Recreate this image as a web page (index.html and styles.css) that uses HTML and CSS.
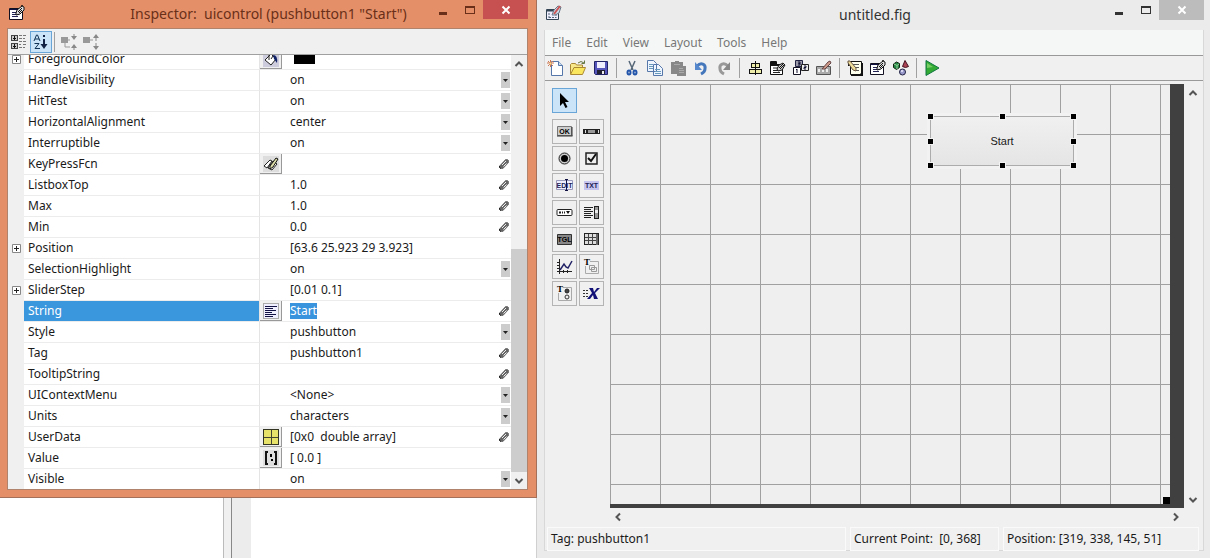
FILE: index.html
```html
<!DOCTYPE html>
<html lang="en">
<head>
    <meta charset="UTF-8">
    <meta name="viewport" content="width=device-width, initial-scale=1.0">
    <title>untitled.fig</title>
    <link rel="stylesheet" href="styles.css">
</head>
<body>
    <!-- Shared icons -->
    <svg class="sprite" aria-hidden="true">
        <symbol id="pen" viewBox="0 0 12 12">
            <path d="M1.500 8L7.500 1.500h2l1 1v2L5 10.500H2.500L1.500 9.500z" fill="#666" stroke="#444" stroke-width=".5"/>
            <path d="M4 7l4-4M5.500 8.500l3-3" stroke="#eee" stroke-width="1"/>
            <path d="M1.500 8v1.500L3 10.500" stroke="#222" fill="none"/>
        </symbol>
        <symbol id="plus" viewBox="0 0 9 9">
            <path d="M.5.5h8v8h-8z" fill="#fff" stroke="#888"/>
            <path d="M2 4.500h5M4.500 2v5" stroke="#222"/>
        </symbol>
        <symbol id="inspect" viewBox="0 0 16 16">
            <path d="M.5 3.500h13v11H.5z" fill="#fff" stroke="#112"/>
            <path d="M1 4.500h12" stroke="#114"/>
            <path d="M3 7.500h5M3 9.500h7M3 11.500h6" stroke="#225"/>
            <path d="M7 8l1-3 5-4 2 1v3l-4 4-4 1z" fill="#ddd" stroke="#111"/>
            <path d="M9 7l4-4M10 8l3-3M12 1l2-1" stroke="#111"/>
        </symbol>
        <symbol id="up" viewBox="0 0 10 10"><path d="M1.500 7L5 3.500 8.500 7" fill="none" stroke="#555" stroke-width="2"/></symbol>
        <symbol id="down" viewBox="0 0 10 10"><path d="M1.500 3L5 6.500 8.500 3" fill="none" stroke="#555" stroke-width="2"/></symbol>
        <symbol id="close" viewBox="0 0 10 10"><path d="M1.500 1.500l7 7M8.500 1.500l-7 7" stroke="#fff" stroke-width="2"/></symbol>
        <symbol id="minimize" viewBox="0 0 10 10"><path d="M1 8.500h8" stroke="currentColor" stroke-width="3"/></symbol>
        <symbol id="maximize" viewBox="0 0 10 10"><path d="M.5 2h9M.5 8.500h9M.5 1v8M9.500 1v8" stroke="currentColor"/><path d="M0 2h10" stroke="currentColor" stroke-width="2"/></symbol>
    </svg>

    <div class="desktop">
        <div class="left-side">
            <section class="window inspector">
                <header class="titlebar">
                    <svg class="app-icon" width="16" height="16"><use href="#inspect"/></svg>
                    <h1>Inspector:  uicontrol (pushbutton1 "Start")</h1>
                    <div class="window-buttons">
                        <button aria-label="Minimize"><svg width="10" height="10"><use href="#minimize"/></svg></button>
                        <button aria-label="Maximize"><svg width="10" height="10"><use href="#maximize"/></svg></button>
                        <button class="close" aria-label="Close"><svg width="10" height="10"><use href="#close"/></svg></button>
                    </div>
                </header>
                <div class="inspector-body">
                    <div class="sort-bar">
                        <button aria-label="Group by category">
                            <svg width="16" height="16" viewBox="0 0 16 16" shape-rendering="crispEdges">
                                <path d="M.5 1.500h6v5h-6zM.5 9.500h6v5h-6z" fill="#ccc" stroke="#444"/>
                                <path d="M2 4h3M3.500 2v4M2 12h3M3.500 10v4" stroke="#111"/>
                                <path d="M8 1.500h3M12 1.500h3M8 4.500h3M12 4.500h2M8 7.500h3M12 7.500h3M8 10.500h2M12 10.500h3M8 13.500h3M12 13.500h2" stroke="#777"/>
                            </svg>
                        </button>
                        <button class="pressed" aria-label="Sort alphabetically">
                            <svg width="16" height="16" viewBox="0 0 16 16">
                                <path d="M1 7l2.500-6h1L7 7M2 5h4M1.500 9.500H6L2 14.500h5" fill="none" stroke="#135"/>
                                <path d="M11 1v2M11 5v7" stroke="#124" stroke-width="2"/>
                                <path d="M7.500 10h7L11 15z" fill="#124"/>
                            </svg>
                        </button>
                        <span class="separator"></span>
                        <button aria-label="Expand all" disabled>
                            <svg width="16" height="16" viewBox="0 0 16 16">
                                <path d="M0 3h7v6H0z" fill="#999"/><path d="M4 9v4h5M9 6H7" fill="none" stroke="#999"/>
                                <path d="M10 2h6l-3 4zM10 14h6l-3-4z" fill="#888"/><path d="M13 0v2M13 14v2" stroke="#888"/>
                            </svg>
                        </button>
                        <button aria-label="Collapse all" disabled>
                            <svg width="16" height="16" viewBox="0 0 16 16">
                                <path d="M0 3h7v6H0z" fill="#999"/><path d="M7 6h3" stroke="#999"/>
                                <path d="M10 4h6l-3-4zM10 12h6l-3 4z" fill="#888"/><path d="M13 4v3M13 9v3" stroke="#888"/>
                            </svg>
                        </button>
                    </div>
                    <div class="property-pane">
                        <div class="property-scroll">
                            <table class="properties">
                                <colgroup><col class="col-expand"><col class="col-name"><col class="col-tool"><col><col class="col-edit"></colgroup>
                                <tbody>
                                    <tr>
                                        <td><svg width="9" height="9"><use href="#plus"/></svg></td>
                                        <th scope="row">ForegroundColor</th>
                                        <td><button class="tool" aria-label="Pick color"><svg width="16" height="16" viewBox="0 0 16 16"><path d="M0 0h16v16H0z" fill="#ccd"/><path d="M2 9l6-6 5 5-5 6z" fill="#fff" stroke="#222"/><path d="M6 9V3q1-2 3 0M8 8l2-3" fill="none" stroke="#222"/><path d="M10 4q5 0 4 8l-3-4z" fill="#126"/></svg></button></td>
                                        <td><span class="swatch"></span></td>
                                        <td></td>
                                    </tr>
                                    <tr>
                                        <td></td><th scope="row"><label for="handle-visibility">HandleVisibility</label></th><td></td>
                                        <td colspan="2"><select id="handle-visibility"><option>on</option><option>off</option></select></td>
                                    </tr>
                                    <tr>
                                        <td></td><th scope="row"><label for="hit-test">HitTest</label></th><td></td>
                                        <td colspan="2"><select id="hit-test"><option>on</option><option>off</option></select></td>
                                    </tr>
                                    <tr>
                                        <td></td><th scope="row"><label for="horizontal-alignment">HorizontalAlignment</label></th><td></td>
                                        <td colspan="2"><select id="horizontal-alignment"><option>center</option><option>left</option><option>right</option></select></td>
                                    </tr>
                                    <tr>
                                        <td></td><th scope="row"><label for="interruptible">Interruptible</label></th><td></td>
                                        <td colspan="2"><select id="interruptible"><option>on</option><option>off</option></select></td>
                                    </tr>
                                    <tr>
                                        <td></td><th scope="row"><label for="key-press">KeyPressFcn</label></th>
                                        <td><button class="tool" aria-label="Edit callback"><svg width="16" height="16" viewBox="0 0 16 16"><path d="M0 0h16v16H0z" fill="#ddd"/><path d="M1 10l6-6 2 1-5 7zM5 12l5-7 4 3-5 6z" fill="#fff" stroke="#222"/><path d="M7 10l6-8 2 1-5 8-3 2z" fill="#dda" stroke="#111"/></svg></button></td>
                                        <td><input type="text" id="key-press"></td>
                                        <td><svg class="pen" width="12" height="12"><use href="#pen"/></svg></td>
                                    </tr>
                                    <tr>
                                        <td></td><th scope="row"><label for="listbox-top">ListboxTop</label></th><td></td>
                                        <td><input type="text" id="listbox-top" value="1.0"></td>
                                        <td><svg class="pen" width="12" height="12"><use href="#pen"/></svg></td>
                                    </tr>
                                    <tr>
                                        <td></td><th scope="row"><label for="max">Max</label></th><td></td>
                                        <td><input type="text" id="max" value="1.0"></td>
                                        <td><svg class="pen" width="12" height="12"><use href="#pen"/></svg></td>
                                    </tr>
                                    <tr>
                                        <td></td><th scope="row"><label for="min">Min</label></th><td></td>
                                        <td><input type="text" id="min" value="0.0"></td>
                                        <td><svg class="pen" width="12" height="12"><use href="#pen"/></svg></td>
                                    </tr>
                                    <tr>
                                        <td><svg width="9" height="9"><use href="#plus"/></svg></td>
                                        <th scope="row"><label for="position">Position</label></th><td></td>
                                        <td><input type="text" id="position" value="[63.6 25.923 29 3.923]"></td><td></td>
                                    </tr>
                                    <tr>
                                        <td></td><th scope="row"><label for="selection-highlight">SelectionHighlight</label></th><td></td>
                                        <td colspan="2"><select id="selection-highlight"><option>on</option><option>off</option></select></td>
                                    </tr>
                                    <tr>
                                        <td><svg width="9" height="9"><use href="#plus"/></svg></td>
                                        <th scope="row"><label for="slider-step">SliderStep</label></th><td></td>
                                        <td><input type="text" id="slider-step" value="[0.01 0.1]"></td><td></td>
                                    </tr>
                                    <tr class="current">
                                        <td></td><th scope="row"><label for="string">String</label></th>
                                        <td><button class="tool" aria-label="Edit text"><svg width="16" height="16" viewBox="0 0 16 16" shape-rendering="crispEdges"><path d="M.5.5h15v15H.5z" fill="#eef" stroke="#aaa"/><path d="M2 3h12M2 5h8M2 7h11M2 9h7M2 11h11M2 13h8" stroke="#114"/></svg></button></td>
                                        <td><input type="text" id="string" class="selected" value="Start"></td>
                                        <td><svg class="pen" width="12" height="12"><use href="#pen"/></svg></td>
                                    </tr>
                                    <tr>
                                        <td></td><th scope="row"><label for="style">Style</label></th><td></td>
                                        <td colspan="2"><select id="style"><option>pushbutton</option></select></td>
                                    </tr>
                                    <tr>
                                        <td></td><th scope="row"><label for="tag">Tag</label></th><td></td>
                                        <td><input type="text" id="tag" value="pushbutton1"></td>
                                        <td><svg class="pen" width="12" height="12"><use href="#pen"/></svg></td>
                                    </tr>
                                    <tr>
                                        <td></td><th scope="row"><label for="tooltip-string">TooltipString</label></th><td></td>
                                        <td><input type="text" id="tooltip-string"></td>
                                        <td><svg class="pen" width="12" height="12"><use href="#pen"/></svg></td>
                                    </tr>
                                    <tr>
                                        <td></td><th scope="row"><label for="context-menu">UIContextMenu</label></th><td></td>
                                        <td colspan="2"><select id="context-menu"><option>&lt;None&gt;</option></select></td>
                                    </tr>
                                    <tr>
                                        <td></td><th scope="row"><label for="units">Units</label></th><td></td>
                                        <td colspan="2"><select id="units"><option>characters</option><option>pixels</option></select></td>
                                    </tr>
                                    <tr>
                                        <td></td><th scope="row"><label for="user-data">UserData</label></th>
                                        <td><button class="tool" aria-label="Edit array"><svg width="16" height="16" viewBox="0 0 16 16" shape-rendering="crispEdges"><path d="M.5.5h15v15H.5z" fill="#e6e26a" stroke="#332"/><path d="M8 1v14M1 8h14" stroke="#443"/></svg></button></td>
                                        <td><input type="text" id="user-data" value="[0x0  double array]"></td>
                                        <td><svg class="pen" width="12" height="12"><use href="#pen"/></svg></td>
                                    </tr>
                                    <tr>
                                        <td></td><th scope="row"><label for="value">Value</label></th>
                                        <td><button class="tool" aria-label="Edit value"><svg width="16" height="16" viewBox="0 0 16 16" shape-rendering="crispEdges"><path d="M0 0h16v16H0z" fill="#ddd"/><path d="M5 2H3v12h2M11 2h2v12h-2" fill="none" stroke="#111" stroke-width="2"/><path d="M7 4h2v3H7zM8 9h2v2H8z"/></svg></button></td>
                                        <td><input type="text" id="value" value="[ 0.0 ]"></td><td></td>
                                    </tr>
                                    <tr>
                                        <td></td><th scope="row"><label for="visible">Visible</label></th><td></td>
                                        <td colspan="2"><select id="visible"><option>on</option><option>off</option></select></td>
                                    </tr>
                                </tbody>
                            </table>
                        </div>
                        <div class="scrollbar">
                            <button aria-label="Scroll up"><svg width="10" height="10"><use href="#up"/></svg></button>
                            <span class="track"></span>
                            <span class="thumb"></span>
                            <button aria-label="Scroll down"><svg width="10" height="10"><use href="#down"/></svg></button>
                        </div>
                    </div>
                </div>
            </section>
            <div class="behind">
                <span class="behind-page"></span>
                <span class="behind-splitter"></span>
                <span class="behind-margin"></span>
                <span class="behind-page"></span>
            </div>
        </div>

        <section class="window guide">
            <header class="titlebar">
                <svg class="app-icon" width="16" height="16" viewBox="0 0 16 16">
                    <path d="M.5 4.500h12v10H.5z" fill="#eef" stroke="#345"/><path d="M1 5.500h11" stroke="#345" stroke-width="2"/>
                    <path d="M3 8v5M3 12.500h7M10 9v4" fill="none" stroke="#567" stroke-dasharray="2 1"/>
                    <path d="M6 10l2-5 4-4 3 1-2 6-4 2z" fill="#cde" stroke="#678"/><path d="M8 9l6-8" stroke="#c55" stroke-width="2"/>
                </svg>
                <h1>untitled.fig</h1>
                <div class="window-buttons">
                    <button aria-label="Minimize"><svg width="10" height="10"><use href="#minimize"/></svg></button>
                    <button aria-label="Maximize"><svg width="10" height="10"><use href="#maximize"/></svg></button>
                    <button class="close" aria-label="Close"><svg width="10" height="10"><use href="#close"/></svg></button>
                </div>
            </header>
            <div class="guide-body">
                <nav class="menubar">
                    <a href="#">File</a>
                    <a href="#">Edit</a>
                    <a href="#">View</a>
                    <a href="#">Layout</a>
                    <a href="#">Tools</a>
                    <a href="#">Help</a>
                </nav>
                <div class="toolbar">
                    <button aria-label="New"><svg width="16" height="16" viewBox="0 0 16 16"><path d="M4.500 1.500h7l4 4v10h-11z" fill="#fff" stroke="#57a"/><path d="M11.500 1.500v4h4" fill="#cde" stroke="#57a"/><path d="M0 3h7M3.500 0v7M1 1l5 5M6 1L1 6" stroke="#c75"/><path d="M2.500 2.500h2v2h-2z" fill="#fd8"/></svg></button>
                    <button aria-label="Open"><svg width="16" height="16" viewBox="0 0 16 16"><path d="M.5 14V4.500l1-1h4l1 1.500h6v3" fill="#f8e88a" stroke="#a83"/><path d="M.5 14.500L4 7.500h11.500l-3 7z" fill="#fbe75e" stroke="#a83"/><path d="M8 3q3-3 6 0M14.500.5v3h-3" fill="none" stroke="#674"/></svg></button>
                    <button aria-label="Save"><svg width="16" height="16" viewBox="0 0 16 16"><path d="M1.500 1.500h13v13h-12l-1-1z" fill="#55b" stroke="#226"/><path d="M4 2h8v6H4z" fill="#eef"/><path d="M4 10h8v4H4z" fill="#223"/><path d="M9 11h2v3H9z" fill="#eee"/></svg></button>
                    <span class="separator"></span>
                    <button aria-label="Cut"><svg width="16" height="16" viewBox="0 0 16 16"><path d="M5 1l4 9M11 1L7 10" stroke="#567" stroke-width="1.500"/><ellipse cx="5" cy="12.500" rx="1.500" ry="2" fill="none" stroke="#25a" stroke-width="2"/><ellipse cx="11" cy="12.500" rx="1.500" ry="2" fill="none" stroke="#25a" stroke-width="2"/></svg></button>
                    <button aria-label="Copy"><svg width="16" height="16" viewBox="0 0 16 16"><path d="M.5.5h6l3 3v8h-9zM6.500 4.500h5l4 4v7h-9z" fill="#eef5ff" stroke="#57a"/><path d="M2 4.500h4M2 6.500h4M2 8.500h4M8 9.500h5M8 11.500h6M8 13.500h6" stroke="#69b"/></svg></button>
                    <button aria-label="Paste" disabled><svg width="16" height="16" viewBox="0 0 16 16"><path d="M1 2h4V1h4v1h4v4h3v10H7v-2H1z" fill="#888"/><path d="M4 4.500h6M9 8.500h4M9 10.500h5M9 12.500h5" stroke="#aaa"/></svg></button>
                    <button aria-label="Undo"><svg width="16" height="16" viewBox="0 0 16 16"><path d="M4 6c4-4 9-2 8 3q0 3-4 5" fill="none" stroke="#47b" stroke-width="3"/><path d="M2 2v8h7z" fill="#58c"/></svg></button>
                    <button aria-label="Redo" disabled><svg width="16" height="16" viewBox="0 0 16 16"><path d="M12 6C8 2 3 4 4 9q0 3 4 5" fill="none" stroke="#999" stroke-width="3"/><path d="M14 2v8H7z" fill="#888"/></svg></button>
                    <span class="separator"></span>
                    <button aria-label="Align objects"><svg width="16" height="16" viewBox="0 0 16 16" shape-rendering="crispEdges"><path d="M8.500 1v14" stroke="#111"/><path d="M4.500 3.500h8v4h-8zM2.500 9.500h12v4h-12z" fill="#eea" stroke="#111"/><path d="M8.500 4v10" stroke="#111"/></svg></button>
                    <button aria-label="Menu editor"><svg width="16" height="16" viewBox="0 0 16 16"><path d="M.5 1.500h6v3h6v10H.5z" fill="#fff" stroke="#111"/><path d="M1 3h6M1 5h11" stroke="#111" stroke-width="2"/><path d="M3 8h5M3 10.500h6M3 12.500h7" stroke="#222"/><path d="M7 9l2-4 4-2 2 2-3 5-4 1z" fill="#ccc" stroke="#111"/><path d="M9 8l5-5M10 9l4-4" stroke="#111"/></svg></button>
                    <button aria-label="Tab order editor"><svg width="16" height="16" viewBox="0 0 16 16"><path d="M2.500.5h7v6h-7z" fill="#99a" stroke="#224"/><path d="M8.500 4.500h7v6h-7z" fill="#eee" stroke="#222"/><path d="M.5 7.500h7v7h-7z" fill="#fff" stroke="#112"/><path d="M5 2h2v1.500H5.500H7V5H5M11 6h2v1.500h-2V9h2M3 10l1-1v4" fill="none" stroke="#113"/></svg></button>
                    <button aria-label="Toolbar editor"><svg width="16" height="16" viewBox="0 0 16 16"><path d="M.5 6.500h14v8H.5z" fill="#aaa" stroke="#555"/><path d="M2 9h2v3H2zM6 9h2v3H6zM10 9h2v3h-2z" fill="#eee"/><path d="M6 9l6-7 2-1 1 2-6 6z" fill="#c98" stroke="#644"/></svg></button>
                    <span class="separator"></span>
                    <button aria-label="Editor"><svg width="16" height="16" viewBox="0 0 16 16"><path d="M3.500 1.500h11v12l-2 1h-9z" fill="#ffe" stroke="#111"/><path d="M15 3v12H4M2 2v4" fill="none" stroke="#111" stroke-width="2"/><path d="M6 4.500h6M8 7.500h4M9 10.500h3" stroke="#555"/><path d="M1 1l2 0 6 7v3L6 10 1 3z" fill="#ed9" stroke="#654"/></svg></button>
                    <button aria-label="Property inspector"><svg width="16" height="16"><use href="#inspect"/></svg></button>
                    <button aria-label="Object browser"><svg width="16" height="16" viewBox="0 0 16 16"><path d="M.5 4L3.500 2l3 1.500v4l-3 2-3-2z" fill="#284" stroke="#121"/><path d="M1 4l3 1.500L6 4M4 5.500V9" fill="none" stroke="#9c9"/><path d="M12 .5l3.500 6q-3 2-6 0z" fill="#a45" stroke="#412"/><circle cx="9.500" cy="12" r="3" fill="#99c" stroke="#224"/><circle cx="9" cy="11" r="1" fill="#eef"/></svg></button>
                    <span class="separator"></span>
                    <button aria-label="Run"><svg width="16" height="16" viewBox="0 0 16 16"><path d="M2 .5v15L15 8z" fill="#3a3" stroke="#174"/><path d="M3 3v5l6-1z" fill="#7c6"/></svg></button>
                </div>
                <div class="workspace">
                    <div class="palette">
                        <button class="pressed" aria-label="Select"><svg width="17" height="17" viewBox="0 0 17 17"><path d="M4 1v13l3-3 2.500 5 2-1L9 10h4z" fill="#000"/></svg></button>
                        <button aria-label="Push button"><svg width="17" height="17" viewBox="0 0 17 17"><path d="M1.500 3.500h14v9h-14z" fill="#ccc" stroke="#777"/><path d="M1 13h15.500M16 4v9" stroke="#333"/><text x="8.500" y="11">OK</text></svg></button>
                        <button aria-label="Slider"><svg width="17" height="17" viewBox="0 0 17 17" shape-rendering="crispEdges"><path d="M0 6h17v5H0z" fill="#222"/><path d="M5 7h7v3H5z" fill="#999"/><path d="M2 7v3M15 7v3" stroke="#ddd"/></svg></button>
                        <button aria-label="Radio button"><svg width="17" height="17" viewBox="0 0 17 17"><circle cx="8.500" cy="8.500" r="5.500" fill="#ccc" stroke="#222"/><circle cx="8.500" cy="8.500" r="3.500" fill="#000"/></svg></button>
                        <button aria-label="Check box"><svg width="17" height="17" viewBox="0 0 17 17"><path d="M3 3h11v11H3z" fill="#eee" stroke="#222" stroke-width="1.500"/><path d="M5 8l3 3 5-7" fill="none" stroke="#111" stroke-width="2"/></svg></button>
                        <button aria-label="Edit text"><svg width="17" height="17" viewBox="0 0 17 17"><path d="M.5 3.500h16v9H.5z" fill="#eef" stroke="#99b"/><text class="blue" x="8.500" y="11">EDIT</text><path d="M10.500 3v10M9 2.500h3M9 13.500h3" stroke="#114"/></svg></button>
                        <button aria-label="Static text"><svg width="17" height="17" viewBox="0 0 17 17"><path d="M1 4h15v9H1z" fill="#c4c4ee"/><text class="blue" x="8.500" y="11">TXT</text></svg></button>
                        <button aria-label="Pop-up menu"><svg width="17" height="17" viewBox="0 0 17 17"><rect x="1" y="5.500" width="15" height="6" rx="1" fill="#fff" stroke="#222"/><path d="M3 8.500h2M6 8.500h1M8 8.500h1" stroke="#222" stroke-width="2"/><path d="M10 7h4l-2 3z" fill="#111"/></svg></button>
                        <button aria-label="List box"><svg width="17" height="17" viewBox="0 0 17 17" shape-rendering="crispEdges"><path d="M11.500 2.500h4v12h-4z" fill="#999" stroke="#222"/><path d="M12 6h3v3h-3z" fill="#eee"/><path d="M1 3.500h9M1 5.500h7M1 7.500h9M1 9.500h7M1 11.500h9M1 13.500h7" stroke="#222"/></svg></button>
                        <button aria-label="Toggle button"><svg width="17" height="17" viewBox="0 0 17 17"><path d="M1.500 3.500h14v10h-14z" fill="#888" stroke="#333"/><text x="8.500" y="11">TGL</text></svg></button>
                        <button aria-label="Table"><svg width="17" height="17" viewBox="0 0 17 17" shape-rendering="crispEdges"><path d="M1.500 2.500h14v11h-14z" fill="#ddd" stroke="#222"/><path d="M5.500 3v11M9.500 3v11M2 6.500h11M2 9.500h11" stroke="#444"/><path d="M14 3v11" stroke="#666" stroke-width="2"/></svg></button>
                        <button aria-label="Axes"><svg width="17" height="17" viewBox="0 0 17 17"><path d="M3.500 1v15M1 13.500h15M1 4.500h3M1 7.500h3M1 10.500h3M7.500 12v3M11.500 12v3" stroke="#222"/><path d="M4 12l4-6 2 3 2 1 4-7" fill="none" stroke="#226" stroke-width="1.500"/></svg></button>
                        <button aria-label="Panel"><svg width="17" height="17" viewBox="0 0 17 17"><path d="M7 3.500h8.500v12H2.500V8" fill="none" stroke="#aaa"/><path d="M6.500 7.500h5v4h-5zM8.500 9.500h5v4h-5z" fill="none" stroke="#999"/><text class="serif" x="4" y="7">T</text></svg></button>
                        <button aria-label="Button group"><svg width="17" height="17" viewBox="0 0 17 17"><path d="M7 2.500h8.500v13H2.500V8" fill="none" stroke="#aaa"/><circle cx="11" cy="6" r="2" fill="#444" stroke="#222"/><circle cx="11" cy="12" r="2" fill="#eee" stroke="#333"/><text class="serif" x="4" y="7">T</text></svg></button>
                        <button aria-label="ActiveX control"><svg width="17" height="17" viewBox="0 0 17 17"><path d="M0 5.500h6M0 8.500h6M0 11.500h6" stroke="#333" stroke-dasharray="2 1"/><path d="M6 3h4l1 4 3-4h3l-5 5 3 6h-4l-1-4-3 4H4l5-6z" fill="#117"/></svg></button>
                    </div>
                    <div class="viewport">
                        <div class="canvas-area">
                            <div class="canvas">
                                <div class="placed">
                                    <button>Start</button>
                                    <i class="handle top start"></i><i class="handle top center"></i><i class="handle top end"></i>
                                    <i class="handle middle start"></i><i class="handle middle center"></i><i class="handle middle end"></i>
                                    <i class="handle bottom start"></i><i class="handle bottom center"></i><i class="handle bottom end"></i>
                                </div>
                                <span class="resize"></span>
                            </div>
                        </div>
                        <div class="scrollbar">
                            <button aria-label="Scroll up"><svg width="10" height="10"><use href="#up"/></svg></button>
                            <button aria-label="Scroll down"><svg width="10" height="10"><use href="#down"/></svg></button>
                        </div>
                        <div class="scrollbar-x">
                            <button aria-label="Scroll left"><svg width="10" height="10" viewBox="0 0 10 10"><path d="M7 1.500L3.500 5 7 8.500" fill="none" stroke="#555" stroke-width="2"/></svg></button>
                            <button aria-label="Scroll right"><svg width="10" height="10" viewBox="0 0 10 10"><path d="M3 1.500L6.500 5 3 8.500" fill="none" stroke="#555" stroke-width="2"/></svg></button>
                        </div>
                    </div>
                </div>
                <footer class="statusbar">
                    <span>Tag: pushbutton1</span>
                    <span>Current Point:  [0, 368]</span>
                    <span>Position: [319, 338, 145, 51]</span>
                </footer>
            </div>
        </section>
    </div>
</body>
</html>
```
FILE: styles.css
```css
* {
    box-sizing: border-box;
}
body {
    margin: 0;
    font-family: "Noto Sans", "Open Sans", sans-serif;
    font-size: 12px;
    color: #1a1a1a;
    background-color: white;
}
button, input, select {
    margin: 0;
    padding: 0;
    border: 0;
    border-radius: 0;
    background: none;
    font: inherit;
    color: inherit;
}
svg {
    display: block;
}
.sprite {
    display: none;
}
.desktop {
    display: grid;
    grid-template-columns: 537fr 673fr;
    height: 100vh;
    min-height: 400px;
}
.left-side, .window, .inspector-body, .guide-body {
    display: flex;
    flex-direction: column;
    min-width: 0;
    min-height: 0;
}

/* Title bars */
.titlebar {
    display: grid;
    grid-template-columns: 1fr auto 1fr;
    height: 28px;
    padding-left: 2px;
}
.titlebar h1 {
    margin: 0;
    font-size: 14px;
    font-weight: normal;
    line-height: 28px;
    white-space: pre;
}
.app-icon {
    margin-top: 5px;
}
.window-buttons {
    display: flex;
    justify-content: flex-end;
    align-items: flex-start;
}
.window-buttons button {
    display: flex;
    justify-content: center;
    align-items: center;
    width: 27px;
    height: 19px;
}
.window-buttons .close {
    width: 45px;
}

/* Inspector window */
.inspector {
    flex: 1;
    padding: 0 8px 7px 7px;
    background-color: #e58f68;
    border-right: 1px solid #a5705a;
    border-bottom: 1px solid #a5705a;
}
.inspector .titlebar {
    color: #6a2f18;
}
.inspector .close {
    background-color: #c75050;
}
.inspector-body {
    flex: 1;
    border: 1px solid #b0836d;
    background-color: #f0f0f0;
}
.sort-bar {
    display: flex;
    align-items: center;
    height: 26px;
    flex: none;
    border-bottom: 1px solid #a0a0a0;
}
.sort-bar button {
    display: flex;
    justify-content: center;
    align-items: center;
    width: 22px;
    height: 22px;
    flex: none;
}
.pressed {
    background-color: #cce4f7;
}
.sort-bar .pressed, .palette .pressed {
    border: 1px solid #6aa5d8;
}
.separator {
    flex: none;
    width: 8px;
    height: 20px;
    background: linear-gradient(#a0a0a0, #a0a0a0) 2px 0 / 1px 100% no-repeat;
}
.sort-bar .separator {
    width: 6px;
}
.property-pane {
    display: flex;
    flex: 1;
    min-height: 0;
}
.property-scroll {
    display: flex;
    flex: 1;
    align-items: flex-end;
    overflow: hidden;
    background: linear-gradient(90deg, #f0f0f0 16px, white 16px);
}
.properties {
    width: 100%;
    margin-bottom: -1px;
    table-layout: fixed;
    border-collapse: separate;
    border-spacing: 0;
}
.col-expand {
    width: 16px;
}
.col-name {
    width: 236px;
}
.col-tool {
    width: 22px;
}
.col-edit {
    width: 16px;
}
.properties td, .properties th {
    height: 21px;
    padding: 0;
    border-bottom: 1px solid #ececec;
    text-align: left;
    font-weight: normal;
    line-height: 20px;
    white-space: pre;
}
.properties td:first-child {
    padding-left: 4px;
    border-bottom-color: #f0f0f0;
}
.properties th {
    padding-left: 4px;
    border-right: 1px solid #e4e4e4;
}
.properties label {
    display: block;
}
.properties input, .properties select {
    display: block;
    width: 100%;
    height: 20px;
    padding-left: 8px;
}
.properties select {
    appearance: none;
    background: url("data:image/svg+xml,%3Csvg xmlns='http://www.w3.org/2000/svg' width='9' height='16'%3E%3Cpath d='M0 0h9v16H0z' fill='%23ccc'/%3E%3Cpath d='M2 7h5L4.500 10z' fill='%23222'/%3E%3C/svg%3E") right 1px center no-repeat;
}
.properties .selected {
    width: 27px;
    height: 16px;
    margin-left: 8px;
    padding: 0;
    background-color: #3a93dd;
    color: white;
}
.current th {
    background-color: #3a96dd;
    color: white;
}
.tool {
    display: flex;
    justify-content: center;
    align-items: center;
    width: 22px;
    height: 20px;
    border-right: 1px solid #999;
    border-bottom: 1px solid #999;
    background-color: #f0f0f0;
}
.swatch {
    display: block;
    width: 21px;
    height: 10px;
    margin-left: 12px;
    background-color: black;
}
.pen {
    margin-left: 3px;
}
.scrollbar {
    display: flex;
    flex-direction: column;
    justify-content: space-between;
    width: 16px;
    background-color: #f0f0f0;
}
.scrollbar button {
    display: flex;
    justify-content: center;
    align-items: center;
    width: 100%;
    height: 17px;
    flex: none;
}
.track {
    flex: 177;
}
.thumb {
    flex: 223;
    background-color: #cdcdcd;
}

/* Window that shows below the inspector */
.behind {
    display: flex;
    height: 60px;
    flex: none;
    border-right: 1px solid #d0d0d0;
}
.behind-page {
    flex: 223;
}
.behind-page:last-child {
    flex: 285;
}
.behind-splitter {
    width: 9px;
    border-left: 1px solid #bbb;
    border-right: 1px solid #888;
    background-color: #f0f0f0;
}
.behind-margin {
    width: 19px;
    background-color: #ececec;
}

/* GUIDE window */
.guide {
    padding: 0 6px 7px 7px;
    background-color: #ebebeb;
}
.guide .titlebar {
    height: 30px;
    color: #333;
}
.guide .titlebar h1 {
    line-height: 30px;
}
.guide .window-buttons button {
    height: 20px;
}
.guide .close {
    background-color: #bcbcbc;
}
.guide-body {
    flex: 1;
    border: 1px solid #d8d8d8;
    border-top: 0;
    background-color: #f0f0f0;
}
.menubar {
    display: flex;
    gap: 15px;
    height: 26px;
    flex: none;
    padding-left: 7px;
    border-bottom: 1px solid #999;
    background-color: #f5f7f6;
}
.menubar a {
    color: #777;
    line-height: 26px;
    text-decoration: none;
}
.toolbar {
    display: flex;
    align-items: center;
    height: 25px;
    flex: none;
    border-bottom: 1px solid #999;
}
.toolbar button {
    width: 23px;
    padding-left: 2px;
    flex: none;
}
.workspace {
    display: flex;
    flex: 1;
    min-height: 0;
    padding-top: 3px;
}
.palette {
    display: grid;
    grid-template-columns: 25px 25px;
    grid-template-rows: 29px;
    grid-auto-rows: 25px;
    align-content: start;
    gap: 2px;
    padding: 4px 6px 0 7px;
}
.palette button {
    display: flex;
    justify-content: center;
    align-items: center;
    border: 1px solid #b4b4b4;
}
.palette .pressed {
    grid-column: span 2;
    width: 25px;
    height: 25px;
}
.palette text {
    font-family: "Liberation Sans", sans-serif;
    font-size: 7px;
    font-weight: bold;
    text-anchor: middle;
}
.palette .blue {
    fill: #225;
}
.palette .serif {
    font-family: "Liberation Serif", serif;
    font-size: 9px;
}
.viewport {
    display: grid;
    grid-template-columns: 1fr 19px;
    grid-template-rows: 1fr 18px;
    flex: 1;
    min-width: 0;
}
.canvas-area {
    padding: 0 14px 4px 0;
    background-color: #404040;
}
.canvas {
    position: relative;
    height: 100%;
    overflow: hidden;
    background-color: #efefef;
    background-image: linear-gradient(#a0a0a0 1px, transparent 1px), linear-gradient(90deg, #a0a0a0 1px, transparent 1px);
    background-size: 50px 50px;
}
.placed {
    position: absolute;
    left: 317px;
    top: 29px;
    width: 150px;
    height: 56px;
    padding: 3px;
    background-color: #f2f2f2;
}
.placed button {
    display: block;
    width: 100%;
    height: 100%;
    border: 1px solid #acacac;
    background: linear-gradient(#f0f0f0, #e5e5e5);
    font-family: "Liberation Sans", Arial, sans-serif;
    font-size: 11px;
}
.handle {
    position: absolute;
    width: 5px;
    height: 5px;
    background-color: black;
    outline: 1px solid #f4f4f4;
}
.handle.top {
    top: 1px;
}
.handle.middle {
    top: 26px;
}
.handle.middle.center {
    display: none;
}
.handle.bottom {
    bottom: 1px;
}
.handle.start {
    left: 1px;
}
.handle.center {
    left: 73px;
}
.handle.end {
    right: 1px;
}
.resize {
    position: absolute;
    right: 0;
    bottom: 0;
    width: 7px;
    height: 7px;
    background-color: black;
}
.viewport .scrollbar {
    width: 17px;
}
.scrollbar-x {
    display: flex;
    justify-content: space-between;
    align-items: center;
    padding: 0 3px;
}
.statusbar {
    display: grid;
    grid-template-columns: 1fr 149px 196px;
    gap: 4px;
    height: 24px;
    flex: none;
    padding: 1px 4px 1px 2px;
}
.statusbar span {
    padding-left: 3px;
    border: 1px solid #fafafa;
    line-height: 22px;
    white-space: pre;
}
```
